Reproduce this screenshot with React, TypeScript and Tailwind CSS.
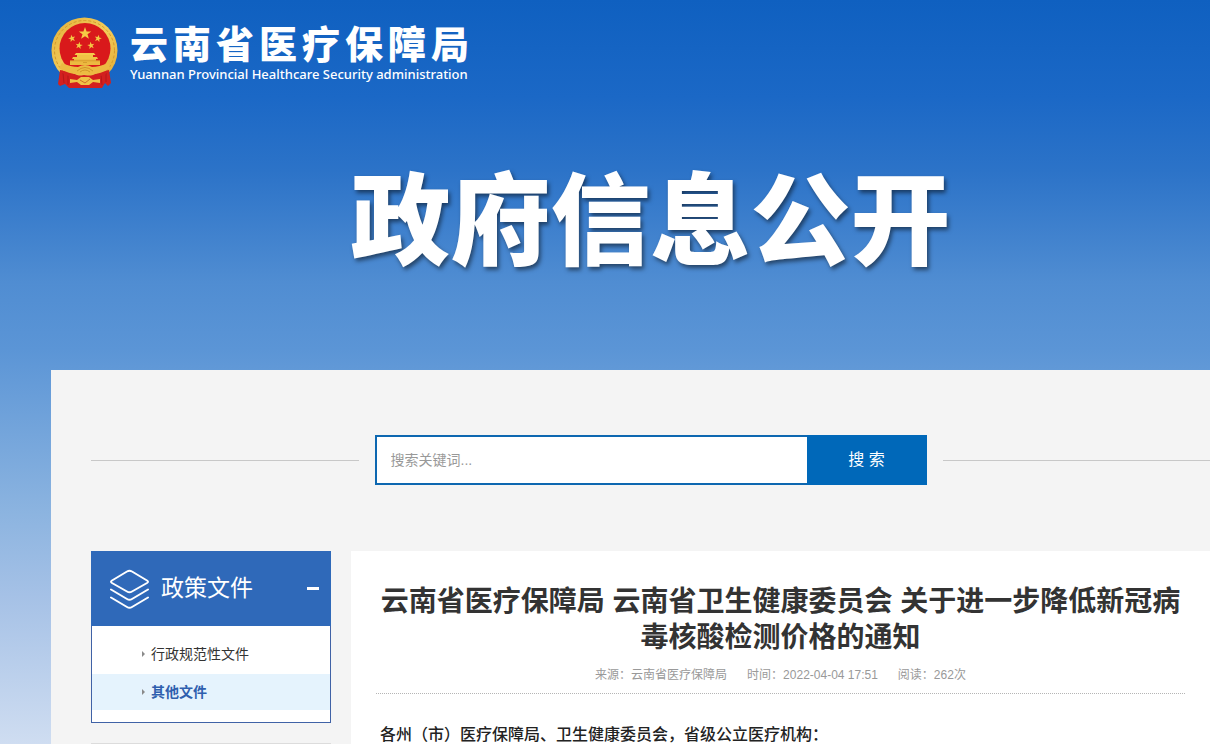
import React from 'react'

const menuItems = [
  { label: '行政规范性文件', active: false },
  { label: '其他文件', active: true }
]

const articleMeta = ['来源：云南省医疗保障局', '时间：2022-04-04 17:51', '阅读：262次']

const star = 'M0 -10 L2.4 -3.2 L9.5 -3.1 L3.8 1.2 L5.9 8.1 L0 4 L-5.9 8.1 L-3.8 1.2 L-9.5 -3.1 L-2.4 -3.2Z'

const smallStars = [
  { x: 21, y: 21.5, r: -15 },
  { x: 47, y: 21.5, r: 15 },
  { x: 28, y: 28.5, r: 10 },
  { x: 40, y: 28.5, r: -10 }
]

const Emblem: React.FC = () => (
  <svg viewBox="0 0 67 72" className="w-[67px] h-[72px] shrink-0" aria-hidden="true">
    <defs>
      <linearGradient id="gold" x1="0" y1="0" x2="1" y2="1">
        <stop offset="0" stopColor="#e3b03a" />
        <stop offset="0.5" stopColor="#f3cc5a" />
        <stop offset="1" stopColor="#e0a932" />
      </linearGradient>
    </defs>
    <circle cx="33.5" cy="33.5" r="33" fill="url(#gold)" />
    <circle cx="33.5" cy="33.5" r="30" fill="none" stroke="#d39a2c" strokeWidth="1" strokeDasharray="3 2" />
    <circle cx="34" cy="31.5" r="25.5" fill="#d9191b" />
    {/* Drapes */}
    <path d="M9 53 L20 55 L34 62 L48 55 L58 53 L60 66 L57 69 L54 66 L51 71 H18 L14 67 L9 69 L7 67Z" fill="#d3201f" />
    <path d="M12 56 L13 66 M17 57 L17 68 M55 56 L55 65 M50 57 L51 68" stroke="#a81416" strokeWidth="0.7" fill="none" />
    <path d={star} transform="translate(34 16.5) scale(0.66)" fill="#f5cc45" />
    {smallStars.map((s) => (
      <path key={s.x} d={star} transform={`translate(${s.x} ${s.y}) rotate(${s.r}) scale(0.38)`} fill="#f3c744" />
    ))}
    {/* Gate tower */}
    <path d="M25 36 H43 L44.500 38 H23.500Z" fill="#f4cb4c" />
    <path d="M26 38 H42 V40 H26Z M22 40 H46 L47 42 H21Z" fill="#f0c345" />
    <path d="M23 42 H45 V43.500 H23Z M19 43.500 H49 V48 H19Z" fill="#ecba40" />
    <path d="M19 43.800 H49 M32 45.500 H36" stroke="#c98a22" strokeWidth="0.6" />
    {/* Garland and gear */}
    <path d="M11 46 Q20 50 27 50 Q34 46 41 50 Q48 50 57 46 L59 51 Q48 59 34 57 Q20 59 8 51Z" fill="#ecbb42" />
    <path d="M26 54 Q34 47 42 54 M29 55 Q34 51 39 55" stroke="#c98a22" strokeWidth="0.8" fill="none" />
    <path d="M10 54 Q22 60 33 58 Q46 60 57 54 L54 58 L40 61 H27 L14 58Z" fill="#d3201f" />
    <path d="M19 62 L26 63 L30 60 H38 L42 63 L49 62 V66 L42 65 L38 68 H30 L26 65 L19 66Z" fill="#efc247" />
    <path d="M29 63 L34 66 L39 62" stroke="#c5551f" strokeWidth="0.8" fill="none" />
  </svg>
)

const LayersIcon: React.FC = () => (
  <svg
    viewBox="0 0 40 40"
    className="w-10 h-10 shrink-0"
    fill="none"
    stroke="white"
    strokeWidth="2"
    strokeLinecap="round"
    strokeLinejoin="round"
    aria-hidden="true"
  >
    <path d="M18 2.500 Q20.500 1 23 2.500 L38 11.500 Q40 12.800 38 14 L23 22.500 Q20.500 24 18 22.500 L3 14 Q1 12.800 3 11.500Z" />
    <path d="M2 20.500 L18 30 Q20.500 31.500 23 30 L39 20.500" />
    <path d="M2 28.500 L18 38 Q20.500 39.500 23 38 L39 28.500" />
  </svg>
)

const SiteHeader: React.FC = () => (
  <header className="pl-[51px] pt-[17px] text-white">
    <a href="#" className="inline-flex items-center gap-3">
      <Emblem />
      <span className="flex flex-col">
        <span className="text-[38px] leading-[42px] font-black tracking-[5px]">云南省医疗保障局</span>
        <span className="font-['Noto_Sans'] text-[13px] leading-4 font-medium">
          Yuannan Provincial Healthcare Security administration
        </span>
      </span>
    </a>
  </header>
)

const SearchBar: React.FC = () => (
  <div className="flex items-center gap-4">
    <div className="flex-1 h-px bg-[#c8c8c8]" />
    <form className="flex h-[50px]" onSubmit={(e) => e.preventDefault()}>
      <input
        type="text"
        aria-label="搜索关键词"
        placeholder="搜索关键词..."
        className="w-108 border-2 border-r-0 border-[#0d67b0] bg-white px-3.5 text-sm text-[#333] placeholder:text-[#999] outline-none"
      />
      <button type="submit" className="w-30 bg-[#0068b9] text-base text-white">
        搜 索
      </button>
    </form>
    <div className="flex-1 h-px bg-[#c8c8c8]" />
  </div>
)

const Sidebar: React.FC = () => (
  <aside className="w-60 shrink-0">
    <button type="button" className="flex w-full h-[75px] items-center bg-[#2f69b9] pl-[18px] pr-3 text-white">
      <LayersIcon />
      <span className="ml-3 text-[23px]">政策文件</span>
      <span className="ml-auto w-3 h-[3px] bg-white" />
    </button>
    <ul className="flex flex-col gap-0.5 border border-t-0 border-[#4062a6] bg-white pt-2.5 pb-3">
      {menuItems.map((item) => (
        <li key={item.label}>
          <a
            href="#"
            className={
              item.active
                ? 'flex h-9 items-center gap-1.5 bg-[#e5f3fd] pl-[50px] text-sm font-bold text-[#2f5fae]'
                : 'flex h-9 items-center gap-1.5 pl-[50px] text-sm text-[#333]'
            }
          >
            <svg viewBox="0 0 3 6" className="w-[3px] h-1.5" aria-hidden="true">
              <path d="M0 0 L3 3 L0 6Z" fill="#8a8a8a" />
            </svg>
            {item.label}
          </a>
        </li>
      ))}
    </ul>
    <div className="mt-5 h-px bg-[#dcdcdc]" />
  </aside>
)

const Article: React.FC = () => (
  <article className="flex-1 bg-white px-[25px] pt-[33px]">
    <h2 className="text-center text-[28px] leading-9 font-bold text-[#333]">
      云南省医疗保障局 云南省卫生健康委员会 关于进一步降低新冠病毒核酸检测价格的通知
    </h2>
    <div className="flex h-[38px] items-center justify-center gap-5 border-b border-dotted border-[#b5b5b5] text-xs text-[#999]">
      {articleMeta.map((text) => (
        <span key={text}>{text}</span>
      ))}
    </div>
    <p className="mt-8 px-1 text-base leading-[18px] font-medium text-[#222]">
      各州（市）医疗保障局、卫生健康委员会，省级公立医疗机构：
    </p>
  </article>
)

export default function App() {
  return (
    <div className="min-h-screen bg-[linear-gradient(to_bottom,#0f60c0_0%,#1b68c6_13%,#2c73c8_23%,#508dd2_38%,#5b95d6_47%,#8cb4e0_69%,#a5c1e6_80%,#cfddf1_100%)] font-['Liberation_Sans','Noto_Sans_CJK_SC',sans-serif]">
      <SiteHeader />
      <h1 className="pt-14 pb-[78px] pl-[91px] text-center text-[100px] leading-[140px] font-black text-white text-shadow-[2px_3px_4px_rgb(0_0_0/0.5)]">
        政府信息公开
      </h1>
      <main className="ml-[51px] bg-[#f4f4f4] pt-[65px] pl-10">
        <SearchBar />
        <div className="mt-[66px] flex gap-5">
          <Sidebar />
          <Article />
        </div>
      </main>
    </div>
  )
}
